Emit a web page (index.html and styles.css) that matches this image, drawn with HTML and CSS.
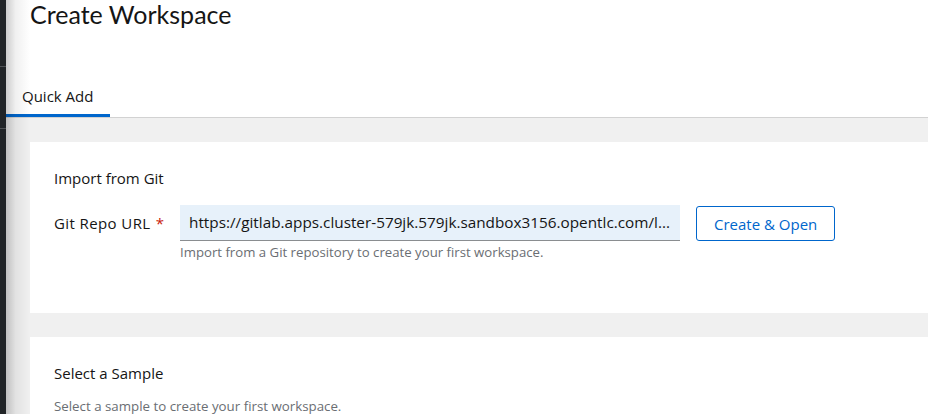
FILE: index.html
```html
<!DOCTYPE html>
<html lang="en">
<head>
<meta charset="utf-8">
<title>Create Workspace</title>
<link rel="stylesheet" href="styles.css">
</head>
<body>
<div class="app">
  <aside class="sidebar">
    <div class="sidebar-line first"></div>
    <div class="sidebar-line second"></div>
  </aside>
  <main class="main">
    <header class="page-header">
      <h1 class="title">Create Workspace</h1>
    </header>
    <nav class="tabs">
      <div class="tab active">Quick Add</div>
    </nav>
    <section class="content">
      <div class="card">
        <h2 class="card-title">Import from Git</h2>
        <div class="form-row">
          <label class="label">Git Repo URL <span class="req">*</span></label>
          <div class="field">
            <div class="input">https://gitlab.apps.cluster-579jk.579jk.sandbox3156.opentlc.com/l...</div>
            <div class="helper">Import from a Git repository to create your first workspace.</div>
          </div>
          <button class="btn">Create &amp; Open</button>
        </div>
      </div>
      <div class="card sample">
        <h2 class="card-title">Select a Sample</h2>
        <p class="sample-text">Select a sample to create your first workspace.</p>
      </div>
    </section>
  </main>
</div>
</body>
</html>
```
FILE: styles.css
```css
* { box-sizing: border-box; }
html, body { margin: 0; padding: 0; height: 100%; overflow: hidden; }
body {
  font-family: "Open Sans", "Liberation Sans", sans-serif;
  color: #151515;
  background: #fff;
}
.app { display: flex; height: 100%; }
.sidebar {
  width: 6px;
  flex: none;
  background: #212427;
  display: flex;
  flex-direction: column;
}
.sidebar-line { height: 1px; background: #4f5255; flex: none; }
.sidebar-line.first { margin-top: 66px; }
.sidebar-line.second { margin-top: 61px; }
.main {
  flex: 1;
  position: relative;
  display: flex;
  flex-direction: column;
  background: #f0f0f0;
  overflow: hidden;
}
.main > * { flex: none; }
.main::before {
  content: "";
  position: absolute;
  left: 0; top: 0; bottom: 0;
  width: 24px;
  background: linear-gradient(to right, rgba(0,0,0,0.2), rgba(0,0,0,0.06) 40%, rgba(0,0,0,0));
  pointer-events: none;
  z-index: 2;
}
.page-header {
  background: #fff;
  padding: 0 24px;
  height: 78px;
}
.title {
  margin: 0;
  font-family: "Lato", "Open Sans", sans-serif;
  font-weight: 400;
  font-size: 25px;
  line-height: 28px;
}
.tabs {
  background: #fff;
  display: flex;
  border-bottom: 1px solid #d2d2d2;
  height: 40px;
}
.tab {
  padding: 0 17px 0 16px;
  font-size: 15px;
  line-height: 37px;
  color: #151515;
}
.tab.active { border-bottom: 3px solid #0066cc; }
.content {
  padding: 24px 0 0 24px;
  display: flex;
  flex-direction: column;
  gap: 24px;
}
.card {
  background: #fff;
  padding: 24px 24px;
  height: 171px;
  flex: none;
}
.card-title {
  margin: 0;
  font-size: 15px;
  font-weight: 500;
  line-height: 24px;
}
.form-row {
  display: flex;
  align-items: flex-start;
  margin-top: 15px;
}
.label {
  width: 126px;
  font-size: 15px;
  font-weight: 500;
  line-height: 36px;
  letter-spacing: 0.4px;
}
.req { color: #c9190b; margin-left: 1px; }
.field { width: 500px; }
.input {
  height: 36px;
  background: #e7f1fa;
  border-bottom: 1px solid #8a8d90;
  font-size: 15.3px;
  line-height: 35px;
  padding: 0 9px;
  white-space: nowrap;
  overflow: hidden;
}
.helper {
  margin-top: 2px;
  font-size: 13.2px;
  line-height: 18px;
  color: #6a6e73;
}
.btn {
  margin-left: 16px;
  height: 35px;
  padding: 0 17px;
  background: #fff;
  border: 1px solid #0066cc;
  border-radius: 3px;
  color: #0066cc;
  font-family: inherit;
  font-size: 15px;
  margin-top: 1px;
}
.sample { padding-top: 24px; }
.sample-text {
  margin: 11px 0 0;
  font-size: 13.3px;
  color: #6a6e73;
  line-height: 20px;
}
```
